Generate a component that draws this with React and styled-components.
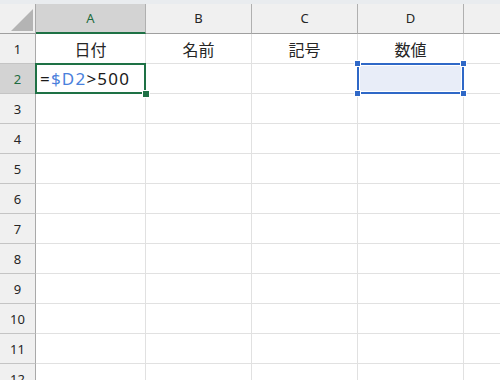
import React from 'react'
import styled, { createGlobalStyle } from 'styled-components'

const Global = createGlobalStyle`
  html, body {
    margin: 0;
    padding: 0;
    background: #ffffff;
    overflow: hidden;
  }
  body {
    font-family: "Noto Sans", "Noto Sans CJK JP", sans-serif;
  }
`

const Page = styled.div`
  width: 500px;
  height: 380px;
  overflow: hidden;
  display: flex;
  flex-direction: column;
`

const TopStrip = styled.div`
  height: 4px;
  flex: none;
  background: #e9ecef;
`

const Sheet = styled.div`
  display: grid;
  grid-template-columns: 36px 110px 106px 106px 106px 106px;
  grid-template-rows: 30px;
  grid-auto-rows: 30px;
`

const Corner = styled.div`
  box-sizing: border-box;
  background: #f0f0f0;
  border-right: 1px solid #a9a9a9;
  border-bottom: 1px solid #9f9f9f;
  display: flex;
  align-items: flex-end;
  justify-content: flex-end;
  padding: 0 2px 2px 0;
  svg {
    display: block;
  }
`

const ColHeader = styled.div`
  box-sizing: border-box;
  background: ${p => (p.$active ? '#d3d3d3' : '#f0f0f0')};
  border-right: 1px solid #b0b0b0;
  border-bottom: ${p => (p.$active ? '2px solid #1e7145' : '1px solid #9f9f9f')};
  color: ${p => (p.$active ? '#1e6b40' : '#262626')};
  font-size: 13px;
  display: flex;
  align-items: center;
  justify-content: center;
  padding-bottom: ${p => (p.$active ? '0' : '1px')};
`

const RowHeader = styled.div`
  box-sizing: border-box;
  background: ${p => (p.$active ? '#d3d3d3' : '#f0f0f0')};
  border-right: 1px solid #a9a9a9;
  border-bottom: 1px solid #c4c4c4;
  color: ${p => (p.$active ? '#1e6b40' : '#262626')};
  font-size: 13px;
  display: flex;
  align-items: center;
  justify-content: center;
`

const Cell = styled.div`
  position: relative;
  box-sizing: border-box;
  border-right: 1px solid #e1e1e1;
  border-bottom: 1px solid #e1e1e1;
  display: flex;
  align-items: center;
  justify-content: ${p => (p.$center ? 'center' : 'flex-start')};
  padding-left: ${p => (p.$center ? '0' : '4px')};
  font-size: 16px;
  color: #262626;
  white-space: nowrap;
`

const Formula = styled.span`
  font-size: 17px;
  letter-spacing: 1.2px;
  color: #1a1a1a;
  position: relative;
  z-index: 2;
`

const Ref = styled.span`
  color: #4a80dc;
`

const Selection = styled.div`
  position: absolute;
  top: -1px;
  left: -1px;
  right: -1px;
  bottom: -1px;
  border: 2px solid ${p => (p.$tone === 'blue' ? '#2f68c7' : '#1e7145')};
  background: ${p => (p.$tone === 'blue' ? '#e8edf8' : 'transparent')};
  box-shadow: ${p => (p.$tone === 'blue' ? 'inset 0 0 0 1px #ffffff' : 'none')};
  z-index: 1;
  pointer-events: none;
`

const Handle = styled.span`
  position: absolute;
  width: ${p => p.$size}px;
  height: ${p => p.$size}px;
  background: ${p => p.$color};
  outline: 1px solid #ffffff;
  ${p => (p.$top ? `top: ${p.$top}px;` : '')}
  ${p => (p.$bottom ? `bottom: ${p.$bottom}px;` : '')}
  ${p => (p.$left ? `left: ${p.$left}px;` : '')}
  ${p => (p.$right ? `right: ${p.$right}px;` : '')}
`

const columns = ['A', 'B', 'C', 'D', '']
const headings = ['日付', '名前', '記号', '数値', '']
const rowCount = 12

function CornerMark() {
  return (
    <Corner>
      <svg width="22" height="22" viewBox="0 0 22 22">
        <polygon points="22,0 22,22 0,22" fill="#b4b4b4" />
      </svg>
    </Corner>
  )
}

function BlueHandles() {
  const c = '#2f68c7'
  return (
    <>
      <Handle $size={5} $color={c} $top={-4} $left={-4} />
      <Handle $size={5} $color={c} $top={-4} $right={-4} />
      <Handle $size={5} $color={c} $bottom={-4} $left={-4} />
      <Handle $size={5} $color={c} $bottom={-4} $right={-4} />
    </>
  )
}

function Row({ index }) {
  const n = index + 1
  return (
    <>
      <RowHeader $active={n === 2}>{n}</RowHeader>
      {columns.map((col, i) => {
        if (n === 1) {
          return (
            <Cell key={i} $center>
              {headings[i]}
            </Cell>
          )
        }
        if (n === 2 && col === 'A') {
          return (
            <Cell key={i}>
              <Selection $tone="green">
                <Handle $size={6} $color="#1e7145" $right={-5} $bottom={-5} />
              </Selection>
              <Formula>
                =<Ref>$D2</Ref>&gt;500
              </Formula>
            </Cell>
          )
        }
        if (n === 2 && col === 'D') {
          return (
            <Cell key={i}>
              <Selection $tone="blue">
                <BlueHandles />
              </Selection>
            </Cell>
          )
        }
        return <Cell key={i} />
      })}
    </>
  )
}

export default function App() {
  return (
    <Page>
      <Global />
      <TopStrip />
      <Sheet>
        <CornerMark />
        {columns.map((col, i) => (
          <ColHeader key={i} $active={col === 'A'}>
            {col}
          </ColHeader>
        ))}
        {Array.from({ length: rowCount }, (_, i) => (
          <Row key={i} index={i} />
        ))}
      </Sheet>
    </Page>
  )
}
